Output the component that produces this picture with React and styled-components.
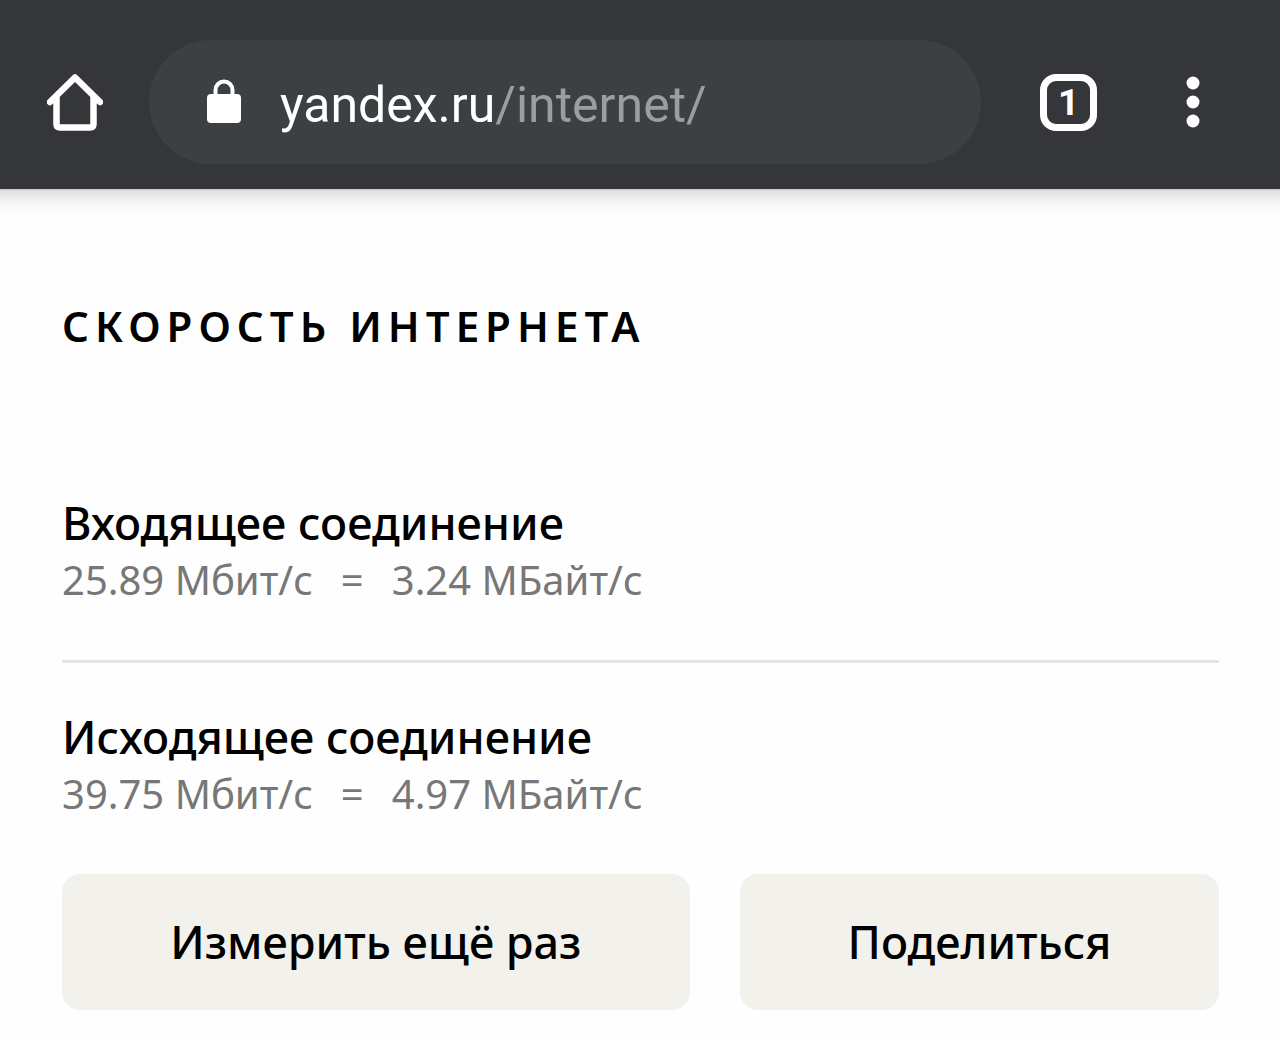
import * as React from "react";
import styled, { createGlobalStyle } from "styled-components";

const GlobalStyle = createGlobalStyle`
  * {
    box-sizing: border-box;
  }
  body {
    margin: 0;
    background-color: #fefefe;
    color: #000;
    font-family: "Noto Sans", "Open Sans", sans-serif;
  }
  h1,
  h2,
  p {
    margin: 0;
  }
  button {
    padding: 0;
    border: none;
    background: none;
    color: inherit;
    font-family: inherit;
    cursor: pointer;
  }
`;

const Styled = {
  Toolbar: styled.header`
    display: flex;
    align-items: center;
    padding: 40px 59px 25px 47px;
    background-color: #35363a;
    color: #fff;
    font-family: Roboto, sans-serif;
  `,
  IconButton: styled.button`
    display: flex;
    justify-content: center;
    flex: none;
    width: 56px;

    svg {
      display: block;
    }
  `,
  AddressBar: styled.div`
    flex: 1;
    display: flex;
    align-items: center;
    gap: 39px;
    min-width: 0;
    height: 124px;
    margin: 0 59px 0 46px;
    padding: 0 58px;
    border-radius: 62px;
    background-color: #3c4043;

    svg {
      flex: none;
    }
    .url {
      flex: 1;
      min-width: 0;
      padding-top: 6px;
      border: none;
      outline: none;
      background: none;
      color: #fff;
      font-family: inherit;
      font-size: 50px;
      line-height: 64px;
      text-align: left;
      white-space: nowrap;
      overflow: hidden;
    }
    .path {
      color: #9b9ea1;
    }
  `,
  TabCounter: styled.button`
    flex: none;
    width: 57px;
    height: 57px;
    margin-right: 68px;
    border: 7px solid #fff;
    border-radius: 16px;
    font-size: 37px;
    font-weight: 700;
    line-height: 44px;
  `,
  Page: styled.main`
    padding: 105px 61px 29px 62px;
    background: linear-gradient(
      #c4c4c4,
      #e0e0e0 2px,
      #eeeeee 9px,
      #f8f8f8 17px,
      #fefefe 27px
    );
  `,
  Title: styled.h1`
    margin-bottom: 135px;
    font-size: 42px;
    font-weight: 600;
    line-height: 64px;
    letter-spacing: 6px;
    text-transform: uppercase;
  `,
  Connection: styled.section`
    padding-bottom: 53px;

    & + & {
      padding-top: 44px;
      border-top: 3px solid #e5e5e5;
    }
    h2 {
      font-size: 45px;
      font-weight: 500;
      line-height: 60px;
    }
    p {
      display: flex;
      gap: 28px;
      color: #777;
      font-size: 40px;
      line-height: 54px;
    }
  `,
  Actions: styled.div`
    display: grid;
    grid-template-columns: 1.31fr 1fr;
    gap: 50px;
  `,
  ActionButton: styled.button`
    height: 136px;
    padding-bottom: 2px;
    border-radius: 18px;
    background-color: #f2f1ec;
    font-size: 45px;
    font-weight: 500;
  `,
};

const connections = [
  { label: "Входящее соединение", bits: "25.89", bytes: "3.24" },
  { label: "Исходящее соединение", bits: "39.75", bytes: "4.97" },
];

function HomeIcon() {
  return (
    <svg width="56" height="57" viewBox="0 0 56 57" fill="none" aria-hidden="true">
      <path
        d="M3 28 28 3.500l25 24.500M9.500 23v27q0 3.500 3.500 3.500h30q3.500 0 3.500-3.500V23"
        stroke="#fff"
        strokeWidth="6.500"
        strokeLinecap="round"
        strokeLinejoin="round"
      />
    </svg>
  );
}

function LockIcon() {
  return (
    <svg width="34" height="46" viewBox="0 0 34 46" fill="none" aria-hidden="true">
      <path d="M8.500 18v-7a8.500 8.500 0 0 1 17 0v7" stroke="#fff" strokeWidth="4" />
      <rect x="0" y="15" width="34" height="29" rx="4" fill="#fff" />
    </svg>
  );
}

function MenuIcon() {
  return (
    <svg width="14" height="52" viewBox="0 0 14 52" fill="#fff" aria-hidden="true">
      <circle cx="7" cy="7" r="6.500" />
      <circle cx="7" cy="26" r="6.500" />
      <circle cx="7" cy="45" r="6.500" />
    </svg>
  );
}

function AddressBar() {
  const [isEdit, setIsEdit] = React.useState(false);
  const [url, setUrl] = React.useState("yandex.ru/internet/");

  const slash = url.indexOf("/");
  const host = slash < 0 ? url : url.slice(0, slash);
  const path = slash < 0 ? "" : url.slice(slash);

  return (
    <Styled.AddressBar>
      <LockIcon />
      {isEdit ? (
        <input
          className="url"
          aria-label="Адрес"
          autoFocus
          value={url}
          onChange={(e) => setUrl(e.target.value)}
          onBlur={() => setIsEdit(false)}
        />
      ) : (
        <button className="url" onClick={() => setIsEdit(true)}>
          {host}
          <span className="path">{path}</span>
        </button>
      )}
    </Styled.AddressBar>
  );
}

export default function App() {
  return (
    <>
      <GlobalStyle />
      <Styled.Toolbar>
        <Styled.IconButton aria-label="Домой">
          <HomeIcon />
        </Styled.IconButton>
        <AddressBar />
        <Styled.TabCounter>1</Styled.TabCounter>
        <Styled.IconButton aria-label="Меню">
          <MenuIcon />
        </Styled.IconButton>
      </Styled.Toolbar>
      <Styled.Page>
        <Styled.Title>Скорость интернета</Styled.Title>
        {connections.map(({ label, bits, bytes }) => (
          <Styled.Connection key={label}>
            <h2>{label}</h2>
            <p>
              <span>{bits} Мбит/с</span>
              <span>=</span>
              <span>{bytes} МБайт/с</span>
            </p>
          </Styled.Connection>
        ))}
        <Styled.Actions>
          <Styled.ActionButton>Измерить ещё раз</Styled.ActionButton>
          <Styled.ActionButton>Поделиться</Styled.ActionButton>
        </Styled.Actions>
      </Styled.Page>
    </>
  );
}
